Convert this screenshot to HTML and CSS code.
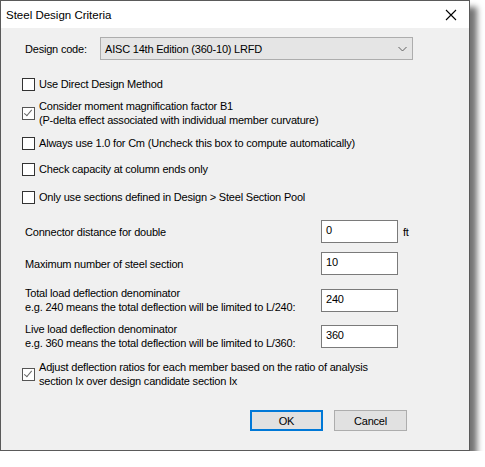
FILE: index.html
```html
<!DOCTYPE html>
<html lang="en">

<head>
    <meta charset="UTF-8">
    <title>Steel Design Criteria</title>
    <link rel="stylesheet" href="styles.css">
</head>

<body>
    <div class="dialog">
        <div class="titlebar">
            <span class="title">Steel Design Criteria</span>
            <svg class="close" width="12" height="12" viewBox="0 0 12 12">
                <path d="M1 1 L11 11 M11 1 L1 11" stroke="#000" stroke-width="1.1" fill="none" />
            </svg>
        </div>

        <div class="content">
            <div class="codeRow">
                <span class="codeLabel">Design code:</span>
                <div class="select">
                    <span>AISC 14th Edition (360-10) LRFD</span>
                    <svg width="9" height="6" viewBox="0 0 9 6">
                        <path d="M0.5 1 L4.5 5 L8.5 1" stroke="#606060" stroke-width="1" fill="none" />
                    </svg>
                </div>
            </div>

            <div class="check first">
                <span class="box"></span>
                <span>Use Direct Design Method</span>
            </div>
            <div class="check two">
                <span class="box checked"></span>
                <span>Consider moment magnification factor B1<br>(P-delta effect associated with individual member curvature)</span>
            </div>
            <div class="check three">
                <span class="box"></span>
                <span>Always use 1.0 for Cm (Uncheck this box to compute automatically)</span>
            </div>
            <div class="check four">
                <span class="box"></span>
                <span>Check capacity at column ends only</span>
            </div>
            <div class="check five">
                <span class="box"></span>
                <span>Only use sections defined in Design &gt; Steel Section Pool</span>
            </div>

            <div class="field connector">
                <span class="label">Connector distance for double</span>
                <div class="input">0</div>
                <span class="unit">ft</span>
            </div>
            <div class="field maxsec">
                <span class="label">Maximum number of steel section</span>
                <div class="input">10</div>
            </div>
            <div class="field total">
                <span class="label">Total load deflection denominator<br>e.g. 240 means the total deflection will be limited to L/240:</span>
                <div class="input">240</div>
            </div>
            <div class="field live">
                <span class="label">Live load deflection denominator<br>e.g. 360 means the total deflection will be limited to L/360:</span>
                <div class="input">360</div>
            </div>

            <div class="check adjust">
                <span class="box checked"></span>
                <span>Adjust deflection ratios for each member based on the ratio of analysis<br>section Ix over design candidate section Ix</span>
            </div>

            <div class="buttons">
                <div class="btn ok">OK</div>
                <div class="btn">Cancel</div>
            </div>
        </div>
    </div>
</body>

</html>
```

FILE: styles.css
```css
body {
    margin: 0;
    background-color: #fff;
    font-family: "Liberation Sans", Arial, sans-serif;
    font-size: 11px;
    letter-spacing: -0.2px;
    color: #000;
}

.dialog {
    width: 468px;
    height: 449px;
    border: 1px solid #5a5a5a;
    background-color: #f0f0f0;
    box-shadow: 7px 7px 6px rgba(0, 0, 0, 0.55);
}

.titlebar {
    height: 27px;
    background-color: #fff;
    display: flex;
    align-items: center;
    justify-content: space-between;
    padding: 0 12px 0 5px;
}

.title {
    font-size: 11.5px;
    letter-spacing: 0;
}

.close {
    margin-top: 1px;
}

.content {
    padding-left: 21px;
}

.codeRow {
    display: flex;
    align-items: center;
    padding-top: 9px;
}

.codeLabel {
    width: 75px;
    padding-left: 3px;
}

.select {
    width: 302px;
    height: 21px;
    border: 1px solid #adadad;
    background-color: #e5e5e5;
    display: flex;
    align-items: center;
    justify-content: space-between;
    padding: 0 5px 0 4px;
}

.check {
    display: flex;
    align-items: center;
    line-height: 14px;
}

.box {
    width: 11px;
    height: 11px;
    border: 1px solid #333;
    background-color: #fff;
    margin-right: 4px;
    flex-shrink: 0;
    position: relative;
}

.box.checked {
    border-color: #555;
}

.box.checked::after {
    content: "";
    position: absolute;
    left: 3px;
    top: 0px;
    width: 3px;
    height: 7px;
    border-right: 1.5px solid #666;
    border-bottom: 1.5px solid #666;
    transform: rotate(40deg);
}

.first {
    margin-top: 17px;
}

.two {
    margin-top: 8px;
}

.three {
    margin-top: 9px;
}

.four {
    margin-top: 12px;
}

.five {
    margin-top: 14px;
}

.field {
    display: flex;
    align-items: center;
    line-height: 14px;
    padding-left: 3px;
}

.label {
    width: 296px;
}

.input {
    width: 71px;
    height: 19px;
    border: 1px solid #7a7a7a;
    background-color: #fff;
    padding: 2px 0 0 4px;
}

.unit {
    margin-left: 5px;
}

.connector {
    margin-top: 16px;
}

.maxsec {
    margin-top: 9px;
}

.total {
    margin-top: 11px;
}

.live {
    margin-top: 8px;
}

.adjust {
    margin-top: 10px;
}

.buttons {
    display: flex;
    gap: 11px;
    padding-left: 228px;
    margin-top: 22px;
}

.btn {
    width: 71px;
    height: 19px;
    border: 1px solid #adadad;
    background-color: #e1e1e1;
    display: flex;
    align-items: center;
    justify-content: center;
}

.btn.ok {
    border: 2px solid #0078d7;
    width: 69px;
    height: 17px;
}
```
